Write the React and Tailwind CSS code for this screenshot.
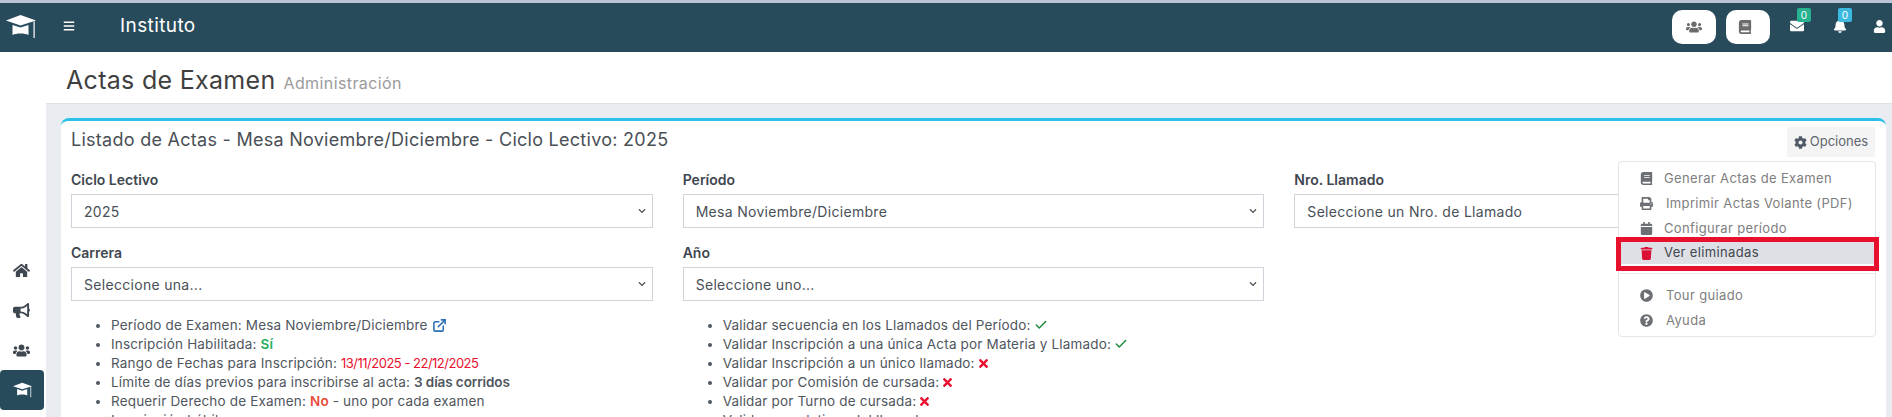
import {
  FaBars,
  FaBell,
  FaBook,
  FaBullhorn,
  FaCalendar,
  FaChevronDown,
  FaCog,
  FaEnvelope,
  FaHome,
  FaPlayCircle,
  FaPrint,
  FaQuestionCircle,
  FaTimes,
  FaTrash,
  FaUser,
  FaUsers,
} from "react-icons/fa";
import { FiExternalLink } from "react-icons/fi";
import { Check as CheckIcon } from "lucide-react";

function GradCap({ className }) {
  return (
    <svg viewBox="0 0 30 25" fill="currentColor" className={className}>
      <path d="M14.500 1 30 6.500 14.500 11.500 0 6.500z" />
      <path d="M6.500 11 14.500 13.500 22.500 11V21c-2-1-4.500-1.500-8-1.500s-6 .5-8 1.500z" />
      <path d="M27.500 7.500h1.200V24h-1.200z" />
    </svg>
  );
}

function Field({ label, value }) {
  return (
    <div className="flex-1 min-w-0">
      <div className="text-[14px] leading-[20px] font-semibold text-[#3f4750] mb-[4px]">{label}</div>
      <div className="h-[34px] border border-[#ced4da] bg-white flex items-center justify-between pl-[12px] pr-[6px]">
        <span className="text-[14px] tracking-[0.3px] text-[#495057]">{value}</span>
        <FaChevronDown className="text-[#555] text-[8px]" />
      </div>
    </div>
  );
}

function Check() {
  return <CheckIcon size={14} strokeWidth={2.5} className="inline text-[#1f8a3c] ml-[3px] mb-[2px]" />;
}

function Cross() {
  return <FaTimes className="inline text-[#ea1030] text-[13px] ml-[2px] mb-[2px]" />;
}

function MenuItem({ icon, text, gap }) {
  return (
    <div className="flex items-center h-[25px] pl-[20px] text-[#7e7e7e] text-[13px] tracking-[0.35px]">
      <span className="w-[14px] flex justify-center text-[#6c6f73] text-[13px]">{icon}</span>
      <span className={gap}>{text}</span>
    </div>
  );
}

export default function App() {
  return (
    <div className="h-[417px] overflow-hidden bg-white font-['Inter',sans-serif] text-[#495057]">
      <div className="h-[3px] bg-[#bcc5d6]" />

      <nav className="h-[49px] bg-[#284b5b] flex items-center text-white">
        <GradCap className="w-[30px] h-[25px] ml-[6px] mb-[2px]" />
        <FaBars className="text-[12px] ml-[27px] mb-[4px]" />
        <span className="text-[19px] ml-[45px] tracking-[0.4px] mb-[2px]">Instituto</span>
        <div className="ml-auto flex items-center">
          <button className="w-[44px] h-[34px] rounded-[10px] bg-white flex items-center justify-center text-[#6c6c6c] text-[16px] mb-[1px]">
            <FaUsers />
          </button>
          <button className="w-[44px] h-[34px] rounded-[10px] bg-white flex items-center pl-[12px] text-[#6c6c6c] text-[14px] ml-[10px] mb-[1px]">
            <FaBook />
          </button>
          <div className="relative ml-[20px] -mt-[3px]">
            <FaEnvelope className="text-[14px]" />
            <span className="absolute -top-[11px] left-[7px] w-[14px] h-[14px] rounded-[2px] bg-[#26b28f] text-[10px] leading-[14px] text-center">0</span>
          </div>
          <div className="relative ml-[29px] -mt-[3px]">
            <FaBell className="text-[14px]" />
            <span className="absolute -top-[11px] left-[5px] w-[14px] h-[14px] rounded-[2px] bg-[#3cb9e0] text-[10px] leading-[14px] text-center">0</span>
          </div>
          <FaUser className="text-[13px] ml-[26px] mr-[6px] -mt-[3px]" />
        </div>
      </nav>

      <div className="flex">
        <aside className="w-[46px] shrink-0 pt-[198px] text-[#3f4750] text-[17px]">
          <div className="w-[42px] h-[40px] flex items-center justify-center">
            <FaHome />
          </div>
          <div className="w-[42px] h-[40px] flex items-center justify-center">
            <FaBullhorn />
          </div>
          <div className="w-[42px] h-[40px] flex items-center justify-center">
            <FaUsers />
          </div>
          <div className="w-[44px] h-[40px] flex items-center justify-center bg-[#284b5b] rounded-[4px] text-white">
            <GradCap className="w-[19px] h-[16px]" />
          </div>
        </aside>

        <main className="flex-1 min-w-0">
          <header className="h-[51px] flex items-baseline pl-[20px] pt-[10px]">
            <h1 className="text-[25px] leading-[36px] text-[#3f3f3f] tracking-[0.3px]">Actas de Examen</h1>
            <span className="text-[16px] text-[#9a9a9a] ml-[8px] tracking-[0.4px]">Administración</span>
          </header>

          <div className="bg-[#e9ecf1] border-t border-[#dfe2e7] pt-[14px] pl-[15px] pr-[6px] h-[400px]">
            <section className="relative bg-white border-t-[3px] border-[#2bc0e8] rounded-t-[8px] px-[10px]">
              <div className="flex items-start justify-between h-[49px]">
                <h2 className="text-[18px] leading-[38px] tracking-[0.27px] text-[#4a4f55]">
                  Listado de Actas - Mesa Noviembre/Diciembre - Ciclo Lectivo: 2025
                </h2>
                <button className="mt-[6px] mr-[1px] w-[88px] h-[30px] bg-[#f4f4f4] flex items-center justify-center text-[13px] text-[#5f6670]">
                  <FaCog className="text-[#4f5a66] text-[13px] mr-[3px]" />
                  Opciones
                </button>
              </div>

              <div className="flex gap-[30px]">
                <Field label="Ciclo Lectivo" value="2025" />
                <Field label="Período" value="Mesa Noviembre/Diciembre" />
                <Field label="Nro. Llamado" value="Seleccione un Nro. de Llamado" />
              </div>
              <div className="flex gap-[30px] mt-[15px]">
                <Field label="Carrera" value="Seleccione una..." />
                <Field label="Año" value="Seleccione uno..." />
                <div className="flex-1" />
              </div>

              <div className="flex gap-[30px] mt-[15px]">
                <div className="flex-1 min-w-0">
                  <ul className="list-disc pl-[40px] text-[13.5px] leading-[19px] tracking-[0.17px] text-[#4f565d]">
                    <li>
                      Período de Examen: Mesa Noviembre/Diciembre
                      <FiExternalLink strokeWidth={2.5} className="inline text-[#2a6fb5] text-[15px] ml-[4px] mb-[2px]" />
                    </li>
                    <li>
                      Inscripción Habilitada: <b className="text-[#27ae60] font-semibold">Sí</b>
                    </li>
                    <li>
                      Rango de Fechas para Inscripción:{" "}
                      <span className="text-[#ea1030] text-[13px] tracking-[-0.5px]">13/11/2025 - 22/12/2025</span>
                    </li>
                    <li>
                      Límite de días previos para inscribirse al acta:{" "}
                      <b className="font-semibold tracking-[-0.1px]">3 días corridos</b>
                    </li>
                    <li>
                      Requerir Derecho de Examen: <b className="text-[#e74c3c] font-semibold">No</b> - uno por cada examen
                    </li>
                    <li>Inscripción hábil</li>
                  </ul>
                </div>
                <div className="flex-1 min-w-0">
                  <ul className="list-disc pl-[40px] text-[13.5px] leading-[19px] tracking-[0.17px] text-[#4f565d]">
                    <li>
                      Validar secuencia en los Llamados del Período:
                      <Check />
                    </li>
                    <li>
                      Validar Inscripción a una única Acta por Materia y Llamado:
                      <Check />
                    </li>
                    <li>
                      Validar Inscripción a un único llamado:
                      <Cross />
                    </li>
                    <li>
                      Validar por Comisión de cursada:
                      <Cross />
                    </li>
                    <li>
                      Validar por Turno de cursada:
                      <Cross />
                    </li>
                    <li>Validar correlativas del llamado</li>
                  </ul>
                </div>
                <div className="flex-1" />
              </div>

              {/* menu de opciones */}
              <div className="absolute top-[40px] right-[10px] w-[258px] h-[176px] bg-white border border-[#e3e5e8] rounded-[4px] pt-[4px]">
                <MenuItem icon={<FaBook />} text="Generar Actas de Examen" gap="ml-[11px]" />
                <MenuItem icon={<FaPrint />} text="Imprimir Actas Volante (PDF)" gap="ml-[13px]" />
                <MenuItem icon={<FaCalendar />} text="Configurar período" gap="ml-[11px]" />
                <div className="-mt-[4px] -ml-[3px] -mr-[4px] h-[34px] border-[5px] border-[#e8112d] bg-white">
                  <div className="h-[22px] bg-[#dee0e5] flex items-center pl-[18px] text-[13px] tracking-[0.35px] text-[#3f4750]">
                    <span className="w-[14px] flex justify-center text-[13px] text-[#dc0f35]">
                      <FaTrash />
                    </span>
                    <span className="ml-[11px]">Ver eliminadas</span>
                  </div>
                </div>
                <div className="border-t border-[#e9ecef] mt-[2px] mb-[9px]" />
                <MenuItem icon={<FaPlayCircle />} text="Tour guiado" gap="ml-[13px]" />
                <MenuItem icon={<FaQuestionCircle />} text="Ayuda" gap="ml-[13px]" />
              </div>
            </section>
          </div>
        </main>
      </div>
    </div>
  );
}
